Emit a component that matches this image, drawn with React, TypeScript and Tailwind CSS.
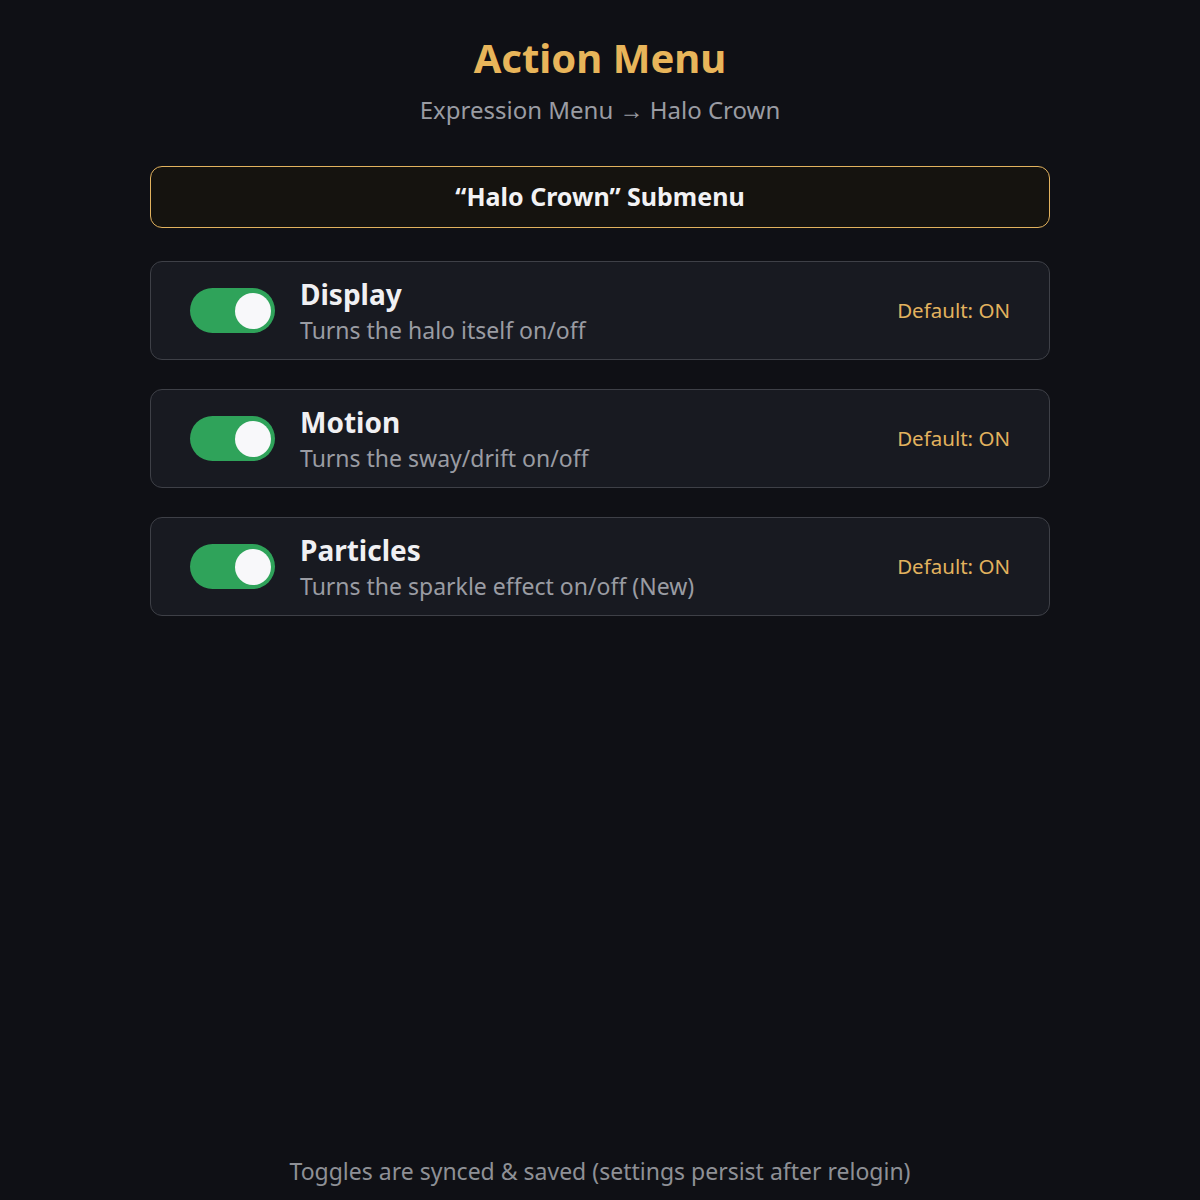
import React from "react"

const ITEMS = [
  { title: "Display", desc: "Turns the halo itself on/off" },
  { title: "Motion", desc: "Turns the sway/drift on/off" },
  { title: "Particles", desc: "Turns the sparkle effect on/off (New)" },
]

function Toggle() {
  return (
    <div className="flex h-[45px] w-[85px] shrink-0 items-center justify-end rounded-full bg-[#2fa35a] pr-[4px]">
      <div className="h-[36px] w-[36px] rounded-full bg-[#f8f8fa]" />
    </div>
  )
}

export default function App() {
  return (
    <div
      className="flex min-h-[1200px] flex-col items-center bg-[#0f1015] text-[#e8e8ec]"
      style={{ fontFamily: '"Noto Sans", "Open Sans", sans-serif' }}
    >
      <h1 className="mt-[32px] text-[40px] leading-[52px] font-bold text-[#e8b55a]">Action Menu</h1>
      <p className="mt-[10px] text-[24px] leading-[32px] text-[#9a9ca3]">Expression Menu → Halo Crown</p>

      <div className="mt-[40px] flex w-[900px] flex-col gap-[29px]">
        <div className="mb-[4px] flex h-[62px] items-center justify-center rounded-[12px] border-[1.5px] border-[#e2b25e] bg-[#15130f]">
          <span className="text-[25px] font-bold text-[#f2f2f4]">“Halo Crown” Submenu</span>
        </div>

        {ITEMS.map((item) => (
          <div
            key={item.title}
            className="flex h-[99px] items-center rounded-[12px] border border-[#3e4047] bg-[#181a21] pl-[39px] pr-[39px]"
          >
            <Toggle />
            <div className="ml-[25px] flex flex-1 flex-col">
              <span className="text-[28px] leading-[34px] font-bold text-[#f0f0f3]">{item.title}</span>
              <span className="mt-[4px] text-[23px] leading-[30px] text-[#9a9ca3]">{item.desc}</span>
            </div>
            <span className="text-[20.5px] text-[#e2b25e]">Default: ON</span>
          </div>
        ))}
      </div>

      <div className="flex-1" />
      <p className="mb-[12px] text-[23px] text-[#8e9096]">Toggles are synced &amp; saved (settings persist after relogin)</p>
    </div>
  )
}
